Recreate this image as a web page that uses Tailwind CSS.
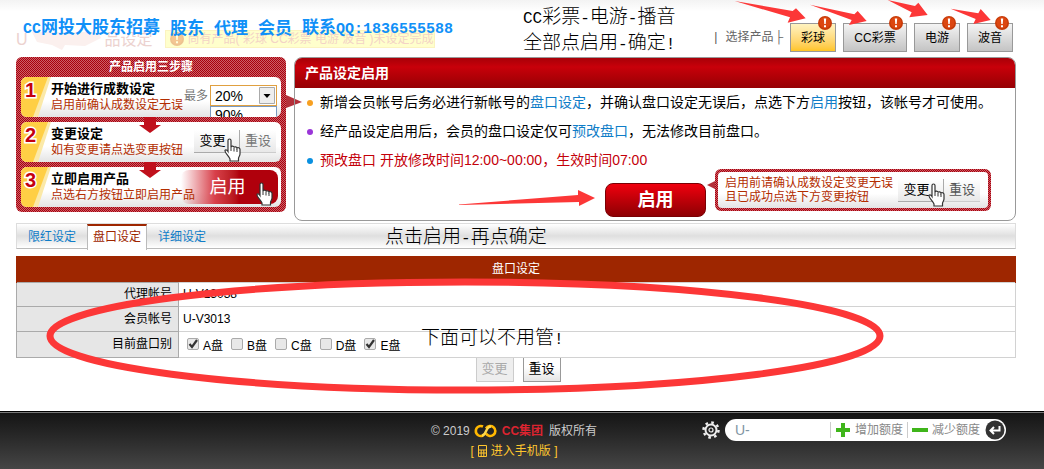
<!DOCTYPE html>
<html lang="zh-CN">
<head>
    <meta charset="UTF-8">
    <meta name="viewport" content="width=device-width, initial-scale=1.0">
    <title>产品设定</title>
    <script src="https://cdn.jsdelivr.net/npm/@tailwindcss/browser@4"></script>
</head>
<body class="relative flex min-h-screen flex-col overflow-x-hidden bg-white font-['Liberation_Sans','Noto_Sans_CJK_SC',sans-serif] text-xs text-black">

    <!-- shared icons -->
    <svg class="hidden">
        <symbol id="hand" viewBox="0 0 18 24">
            <path d="M4 2.5c0-2 3-2 3 0V9c.5-1.400 3-1 3 .5.500-1.200 3-.8 3 .7.700-1 3-.5 3 1.300V16c0 2-1.500 3-1.500 4.500V23H6v-2C5 18.500 1.500 15.500 1 13c-.2-1.500 1.600-1.800 3 .5z" fill="#fff" stroke="#333" stroke-width="1.200"/>
            <path d="M7 9v4M10 10v3.500M13 11v3" stroke="#333" stroke-width="1"/>
        </symbol>
        <symbol id="alert" viewBox="0 0 14 14">
            <circle cx="7" cy="7" r="7" fill="#c63a08"/>
            <circle cx="7" cy="6.500" r="5.500" fill="#dc4610"/>
            <path d="M5.800 2.500h2.400L7.700 8H6.300zM6 9.200h2v2H6z" fill="#fff"/>
        </symbol>
    </svg>

    <header class="flex h-[57px] items-start justify-between bg-linear-to-b from-[#f3f3f3] to-white to-20% pr-[31px] pl-4">
        <div class="flex gap-3 pt-[30px]">
            <h1 class="flex items-center text-base leading-5 text-[#ecd2cf]">U
                <svg class="h-5 w-[77px]" viewBox="0 0 77 20"><path d="M4 2h66l3 6-16 8-20-1-3 5-10-5-15-3z" fill="#fbf0ee"/></svg>品设定</h1>
            <p class="flex h-[18px] items-center gap-1 border border-[#fbf3c0] bg-[#ffffcc] pl-1 text-[#f3d3c6]">
                <svg class="size-[14px] opacity-30"><use href="#alert"/></svg>
                尚有产品( 彩球 CC彩票 电游 波音 )未设定完成
            </p>
        </div>
        <nav class="flex gap-[7px] pt-[23px]">
            <span class="pt-[6px] leading-4 text-[#666]"><i class="pr-2 text-[#555] not-italic">|</i>选择产品<i class="pl-px not-italic">├</i></span>
            <button class="relative h-[29px] w-[46px] border border-[#999] bg-linear-to-b from-[#fff3c0] to-[#ffc520]">彩球<svg class="absolute -top-2 right-[3px] size-[14px]"><use href="#alert"/></svg></button>
            <button class="relative h-[29px] w-16 border border-[#999] bg-linear-to-b from-[#f4f4f4] to-[#c4c4c4]">CC彩票<svg class="absolute -top-2 right-[3px] size-[14px]"><use href="#alert"/></svg></button>
            <button class="relative h-[29px] w-[46px] border border-[#999] bg-linear-to-b from-[#f4f4f4] to-[#c4c4c4]">电游<svg class="absolute -top-2 right-[3px] size-[14px]"><use href="#alert"/></svg></button>
            <button class="relative h-[29px] w-[46px] border border-[#999] bg-linear-to-b from-[#f4f4f4] to-[#c4c4c4]">波音<svg class="absolute -top-2 right-[3px] size-[14px]"><use href="#alert"/></svg></button>
        </nav>
    </header>

    <main class="pr-7 pl-4">
        <div class="flex items-start gap-2">
            <!-- three steps -->
            <section class="relative w-[270px] shrink-0 rounded-md bg-[conic-gradient(#a8000c_25%,#cc6068_0_50%,#a8000c_0_75%,#cc6068_0)] bg-[length:2px_2px] px-[5px] pb-[5px]">
                <svg class="absolute top-9 -right-4 h-4 w-4" viewBox="0 0 16 16"><path d="M0 2l16 7-16 6z" fill="#b3303a"/></svg>
                <h2 class="h-5 text-center text-xs leading-5 font-bold text-white">产品启用三步骤</h2>
                <ol class="flex flex-col gap-[5px]">
                    <li class="relative flex h-10 overflow-hidden rounded-md bg-linear-to-b from-white from-60% to-[#e4e4e4]">
                        <svg class="w-[30px] shrink-0" viewBox="0 0 30 40"><path d="M0 0h30L17 40H0z" fill="#fbe9a8"/><path d="M0 0h27L12 40H0z" fill="#ffcf45"/><text x="4" y="20" font-size="20" font-weight="bold" fill="#c4000f" stroke="#fff" stroke-width="3" paint-order="stroke">1</text></svg>
                        <div class="pt-1"><h3 class="text-[13px] leading-4 font-bold">开始进行成数设定</h3><p class="leading-4 text-[#b32d00]">启用前确认成数设定无误</p></div>
                        <div class="absolute top-1 right-1 flex h-9 items-start">
                            <label for="quota" class="pt-[7px] pr-[2px] text-[#777]">最多</label>
                            <div class="relative pt-1">
                                <select id="quota" class="block h-[21px] w-[67px] appearance-none border border-[#e0a040] bg-white pl-1 text-sm leading-4"><option>20%</option><option>90%</option></select>
                                <svg class="pointer-events-none absolute top-[6px] right-[2px] h-[17px] w-4" viewBox="0 0 16 17"><path d="M.5.500h15v16H.500z" fill="#eee" stroke="#aaa"/><path d="M4.500 7h7L8 11z"/></svg>
                                <div class="h-3 w-[67px] overflow-hidden border border-[#7a9ac0] bg-white pl-1 text-sm leading-4">90%</div>
                            </div>
                        </div>
                    </li>
                    <li class="relative flex h-10 rounded-md bg-linear-to-b from-white from-60% to-[#e4e4e4]">
                        <svg class="absolute -top-[5px] left-[117px] h-4 w-6" viewBox="0 0 24 16"><path d="M6 0h12v8h5L12 16 1 8h5z" fill="#c0101c"/></svg>
                        <svg class="w-[30px] shrink-0 rounded-l-md" viewBox="0 0 30 40"><path d="M0 0h30L17 40H0z" fill="#fbe9a8"/><path d="M0 0h27L12 40H0z" fill="#ffcf45"/><text x="4" y="20" font-size="20" font-weight="bold" fill="#c4000f" stroke="#fff" stroke-width="3" paint-order="stroke">2</text></svg>
                        <div class="pt-1"><h3 class="text-[13px] leading-4 font-bold">变更设定</h3><p class="leading-4 text-[#b32d00]">如有变更请点选变更按钮</p></div>
                        <div class="absolute top-2 right-[5px] flex text-[13px]">
                            <button class="h-[23px] w-[46px] border-r border-b border-[#aaa] bg-linear-to-b from-white to-[#e8e8e8] pr-2">变更</button>
                            <button class="h-[23px] w-9 border-b border-[#ccc] bg-linear-to-b from-white to-[#e8e8e8] text-[#777]">重设</button>
                            <svg class="absolute top-2 left-[30px] h-6 w-[18px]"><use href="#hand"/></svg>
                        </div>
                    </li>
                    <li class="relative flex h-10 rounded-md bg-linear-to-b from-white from-60% to-[#e4e4e4]">
                        <svg class="absolute -top-[5px] left-[117px] h-4 w-6" viewBox="0 0 24 16"><path d="M6 0h12v8h5L12 16 1 8h5z" fill="#c0101c"/></svg>
                        <svg class="w-[30px] shrink-0 rounded-l-md" viewBox="0 0 30 40"><path d="M0 0h30L17 40H0z" fill="#fbe9a8"/><path d="M0 0h27L12 40H0z" fill="#ffcf45"/><text x="4" y="20" font-size="20" font-weight="bold" fill="#c4000f" stroke="#fff" stroke-width="3" paint-order="stroke">3</text></svg>
                        <div class="z-10 pt-1"><h3 class="text-[13px] leading-4 font-bold">立即启用产品</h3><p class="leading-4 text-[#b32d00]">点选右方按钮立即启用产品</p></div>
                        <button class="absolute top-[3px] right-[3px] h-[34px] w-[97px] rounded-lg bg-linear-to-r from-transparent via-[#d8404a] via-35% to-[#b0000c] to-60% pr-1 text-lg text-white">启用<svg class="absolute top-3 right-1 h-6 w-[18px]"><use href="#hand"/></svg></button>
                    </li>
                </ol>
            </section>

            <!-- enable product -->
            <section class="relative h-[164px] flex-1 rounded-lg border border-[#999]">
                <h2 class="h-[30px] rounded-t-[7px] bg-linear-to-b from-[#a80008] via-[#c8000a] via-30% to-[#960004] pl-[10px] text-sm leading-[30px] font-bold text-white">产品设定启用</h2>
                <ul class="pl-3 text-sm leading-[29px]">
                    <li class="flex items-center gap-[7px]"><i class="size-[6px] rounded-full bg-[#f7a021]"></i><span>新增会员帐号后务必进行新帐号的<a href="#" class="text-[#0f7dc8]">盘口设定</a>，并确认盘口设定无误后，点选下方<a href="#" class="text-[#0f7dc8]">启用</a>按钮，该帐号才可使用。</span></li>
                    <li class="flex items-center gap-[7px]"><i class="size-[6px] rounded-full bg-[#9a35d8]"></i><span>经产品设定启用后，会员的盘口设定仅可<a href="#" class="text-[#0f7dc8]">预改盘口</a>，无法修改目前盘口。</span></li>
                    <li class="flex items-center gap-[7px] text-[#c4000a]"><i class="size-[6px] rounded-full bg-[#0a90e0]"></i><span>预改盘口 开放修改时间12:00~00:00，生效时间07:00</span></li>
                </ul>
                <button class="absolute top-[125px] left-[310px] h-[34px] w-[101px] rounded-lg border border-[#7a0004] bg-linear-to-b from-[#f0000e] to-[#8e0004] text-lg font-bold text-white">启用</button>
                <div class="absolute top-[111px] left-[420px] flex h-[42px] w-[276px] items-center rounded-md bg-[conic-gradient(#a8000c_25%,#cc6068_0_50%,#a8000c_0_75%,#cc6068_0)] bg-[length:2px_2px] p-[3px]">
                    <svg class="absolute top-3 -left-2 h-2 w-2" viewBox="0 0 8 8"><path d="M0 4l8-4v8z" fill="#b3303a"/></svg>
                    <div class="relative flex h-9 flex-1 items-center justify-between rounded bg-linear-to-b from-white from-60% to-[#e4e4e4] pr-2 pl-[7px]">
                        <p class="leading-[14px] text-[#b32d00]">启用前请确认成数设定变更无误<br>且已成功点选下方变更按钮</p>
                        <div class="relative flex text-[13px]">
                            <button class="h-[23px] w-[46px] border-r border-b border-[#aaa] bg-linear-to-b from-white to-[#e8e8e8] pr-2">变更</button>
                            <button class="h-[23px] w-9 border-b border-[#ccc] bg-linear-to-b from-white to-[#e8e8e8] text-[#555]">重设</button>
                            <svg class="absolute top-1 left-[30px] h-6 w-[18px]"><use href="#hand"/></svg>
                        </div>
                    </div>
                </div>
                <svg class="absolute top-[132px] left-[164px] h-4 w-[136px]" viewBox="0 0 136 16"><path d="M0 14.500L119 5V0l17 8-16 8v-4L0 15z" fill="#fc3737"/></svg>
            </section>
        </div>

        <nav class="mt-[2px] flex h-[26px] border border-b-[#bbb] border-[#ddd] bg-linear-to-b from-white via-[#dfdfdf] to-white">
            <a href="#" class="px-[11px] leading-[26px] text-[#0f7dc8]">限红设定</a>
            <a href="#" class="h-[26px] border-x border-t-2 border-x-[#bbb] border-t-[#9e2600] bg-white px-[5px] leading-[22px] text-[#9e2600]">盘口设定</a>
            <a href="#" class="px-[11px] leading-[26px] text-[#0f7dc8]">详细设定</a>
        </nav>

        <table class="mt-[7px] w-full border-collapse">
            <thead>
                <tr class="h-[26px] bg-[#9e2600] text-white"><th colspan="2" class="border-x border-[#9e2600] font-normal">盘口设定</th></tr>
            </thead>
            <tbody>
                <tr class="h-6"><th class="w-[162px] border border-[#aaa] bg-[#e6e6e6] pr-[6px] text-right font-normal">代理帐号</th><td class="border border-[#d2d2d2] pl-1">U-V13038</td></tr>
                <tr class="h-[25px]"><th class="border border-[#aaa] bg-[#e6e6e6] pr-[6px] text-right font-normal">会员帐号</th><td class="border border-[#d2d2d2] pl-1">U-V3013</td></tr>
                <tr class="h-[26px]">
                    <th class="border border-[#aaa] bg-[#e6e6e6] pr-[6px] text-right font-normal">目前盘口别</th>
                    <td class="border border-[#d2d2d2] pl-2">
                        <div class="flex gap-2">
                            <label class="relative flex items-center gap-1"><input type="checkbox" checked class="peer size-3 appearance-none rounded-xs border border-[#aaa] bg-[#e8e8e8]"><svg class="pointer-events-none absolute left-0 hidden size-3 peer-checked:block" viewBox="0 0 12 12"><path d="M2.500 6l2.500 3 5-7" fill="none" stroke="#333" stroke-width="2.200"/></svg><span class="pt-1">A盘</span></label>
                            <label class="flex items-center gap-1"><input type="checkbox" class="size-3 appearance-none rounded-xs border border-[#aaa] bg-[#e8e8e8]"><span class="pt-1">B盘</span></label>
                            <label class="flex items-center gap-1"><input type="checkbox" class="size-3 appearance-none rounded-xs border border-[#aaa] bg-[#e8e8e8]"><span class="pt-1">C盘</span></label>
                            <label class="flex items-center gap-1"><input type="checkbox" class="size-3 appearance-none rounded-xs border border-[#aaa] bg-[#e8e8e8]"><span class="pt-1">D盘</span></label>
                            <label class="relative flex items-center gap-1"><input type="checkbox" checked class="peer size-3 appearance-none rounded-xs border border-[#aaa] bg-[#e8e8e8]"><svg class="pointer-events-none absolute left-0 hidden size-3 peer-checked:block" viewBox="0 0 12 12"><path d="M2.500 6l2.500 3 5-7" fill="none" stroke="#333" stroke-width="2.200"/></svg><span class="pt-1">E盘</span></label>
                        </div>
                    </td>
                </tr>
            </tbody>
        </table>
        <div class="flex justify-center gap-[9px] pl-1 text-[13px]">
            <button disabled class="h-6 w-[38px] border border-t-0 border-[#ccc] bg-[#eee] text-[#aaa]">变更</button>
            <button class="h-6 w-[38px] border border-t-0 border-[#999] bg-linear-to-b from-white from-40% to-[#e4e4e4]">重设</button>
        </div>
    </main>

    <footer class="mt-auto grid h-[58px] grid-cols-[1fr_auto_1fr] items-start border-t border-black bg-linear-to-b from-[#141414] to-[#464646] pt-[7px] pr-[38px] pl-[22px] text-[#ccc] shadow-[inset_0_1px_0_#777]">
        <div></div>
        <div class="flex flex-col items-center pt-[2px] leading-5">
            <p class="flex items-center gap-1">© 2019
                <svg class="h-[14px] w-6" viewBox="0 0 24 14"><path d="M9 11.500A5 5 0 1 1 9 2.500M12 4.500a5 5 0 1 1 0 5" fill="none" stroke="#ffb800" stroke-width="2.600"/><path d="M8 11.500c5 0 3-9 9-9" fill="none" stroke="#ffd84a" stroke-width="2.400"/></svg>
                <b class="text-[#dc2430]">CC集团</b><span class="pl-[2px]">版权所有</span></p>
            <a href="#" class="flex items-center gap-1 text-[#ffc62e]">[
                <svg class="h-3 w-[9px]" viewBox="0 0 9 12"><path d="M.5.500h8v11h-8zM.500 5h8M.500 8h8M3.200 5v6M5.800 5v6" fill="none" stroke="#ffc62e"/></svg>
                进入手机版 ]</a>
        </div>
        <form class="flex items-center gap-[5px] justify-self-end">
            <button type="button" aria-label="设置"><svg class="size-[18px]" viewBox="0 0 18 18" fill="none" stroke="#eee"><circle cx="9" cy="9" r="5.500" stroke-width="2"/><circle cx="9" cy="9" r="2" stroke-width="1.200"/><circle cx="9" cy="9" r="7.500" stroke-width="2.500" stroke-dasharray="2.600 3.290"/></svg></button>
            <div class="flex h-[22px] items-center rounded-full bg-white pr-px pl-[10px] text-[#888]">
                <input type="text" aria-label="帐号" value="U-" class="w-[95px] text-sm text-[#7f95a3] outline-none">
                <button type="button" class="flex items-center gap-1 border-l border-[#ccc] pr-1 pl-1 leading-4"><svg class="size-4" viewBox="0 0 16 16"><path d="M8 1v14M1 8h14" stroke="#3fb51b" stroke-width="4"/></svg>增加额度</button>
                <button type="button" class="flex items-center gap-1 border-l border-[#ccc] pr-[5px] pl-1 leading-4"><svg class="size-4" viewBox="0 0 16 16"><path d="M0 8h16" stroke="#3fb51b" stroke-width="4"/></svg>减少额度</button>
                <button aria-label="送出"><svg class="size-5" viewBox="0 0 20 20"><circle cx="10" cy="10" r="9.500" fill="#333"/><path d="M14.500 6v4.500H6M9 7l-3.500 3.500L9 14" fill="none" stroke="#fff" stroke-width="2"/></svg></button>
            </div>
        </form>
    </footer>

    <!-- notes over the page -->
    <p class="absolute top-4 left-[23px] flex items-center gap-[10px] text-[17px] leading-6 font-bold text-[#1090f8]">
        <span><span class="font-['Liberation_Mono',monospace] text-[15px]">CC</span>网投大股东招募</span>
        <span>股东</span><span>代理</span><span>会员</span>
        <span>联系<span class="font-['Liberation_Mono',monospace] text-[15px]">QQ:1836555588</span></span>
    </p>
    <p class="absolute top-[5px] left-[523px] text-[19px] leading-6 font-light"><span class="font-['Liberation_Mono',monospace] text-[16px]">CC</span>彩票<span class="font-['Liberation_Mono',monospace] text-[16px]">-</span>电游<span class="font-['Liberation_Mono',monospace] text-[16px]">-</span>播音<br>全部点启用<span class="font-['Liberation_Mono',monospace] text-[16px]">-</span>确定<span class="font-['Liberation_Mono',monospace] text-[16px]">!</span></p>
    <p class="absolute top-[225px] left-[385px] text-[19px] leading-6 font-light">点击启用<span class="font-['Liberation_Mono',monospace] text-[16px]">-</span>再点确定</p>
    <p class="absolute top-[326px] left-[421px] text-[19px] leading-6 font-light">下面可以不用管<span class="font-['Liberation_Mono',monospace] text-[16px]">!</span></p>
    <svg class="pointer-events-none absolute top-0 right-0 h-[60px] w-[344px]" viewBox="0 0 1032 180" fill="#fc3737">
        <path d="M104 3L278 33l10-8 29 30-54 13 7-16z"/>
        <path d="M330 14L463 43l10-10 27 30-53 12 8-15z"/>
        <path d="M563 0l82 18 10-10 28 37-55 7 7-15z"/>
        <path d="M752 26l83 14 7-13 30 33-52 12 7-15z"/>
    </svg>
    <svg class="pointer-events-none absolute top-[277px] left-[46px] h-[118px] w-[838px]" viewBox="0 0 838 118"><ellipse cx="419" cy="59" rx="415" ry="54" fill="none" stroke="#fc3737" stroke-width="7"/></svg>
</body>
</html>
